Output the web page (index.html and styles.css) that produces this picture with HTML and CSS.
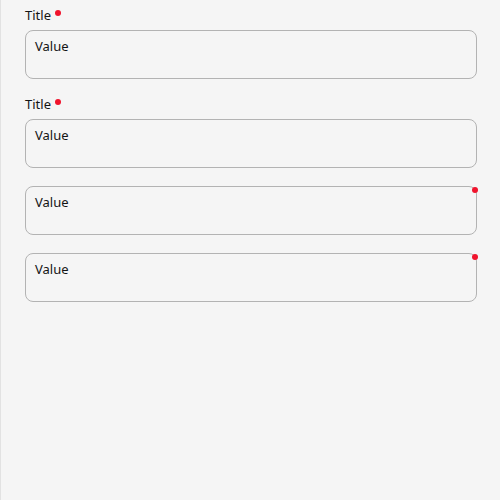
FILE: index.html
```html
<!DOCTYPE html>
<html lang="en">
<head>
<meta charset="utf-8">
<title>Form</title>
<link rel="stylesheet" href="styles.css">
</head>
<body>
<main class="panel">
  <div class="field">
    <label class="label">Title<span class="req-dot"></span></label>
    <div class="input">Value</div>
  </div>
  <div class="field">
    <label class="label">Title<span class="req-dot"></span></label>
    <div class="input">Value</div>
  </div>
  <div class="field">
    <div class="input input-req">Value<span class="corner-dot"></span></div>
  </div>
  <div class="field">
    <div class="input input-req">Value<span class="corner-dot"></span></div>
  </div>
</main>
</body>
</html>
```

FILE: styles.css
```css
html, body {
  margin: 0;
  padding: 0;
  height: 100%;
  background: #f5f5f5;
}

body {
  font-family: "Noto Sans", "Open Sans", sans-serif;
  color: #141414;
}

.panel {
  box-sizing: border-box;
  min-height: 100%;
  border-left: 1px solid #e2e2e2;
  padding: 8px 23px 0 24px;
  display: flex;
  flex-direction: column;
  gap: 18px;
}

.field {
  display: flex;
  flex-direction: column;
}

.label {
  font-size: 13px;
  line-height: 15px;
  margin-bottom: 7px;
  display: flex;
  align-items: flex-start;
}

.req-dot {
  width: 6px;
  height: 6px;
  border-radius: 50%;
  background: #f0142d;
  margin-left: 4px;
  margin-top: 2px;
}

.input {
  position: relative;
  box-sizing: border-box;
  height: 49px;
  border: 1px solid #b3b3b3;
  border-radius: 8px;
  padding: 6px 9px;
  font-size: 13px;
  line-height: 18px;
}

.corner-dot {
  position: absolute;
  top: 0;
  right: -2px;
  width: 6px;
  height: 6px;
  border-radius: 50%;
  background: #f0142d;
}
```
